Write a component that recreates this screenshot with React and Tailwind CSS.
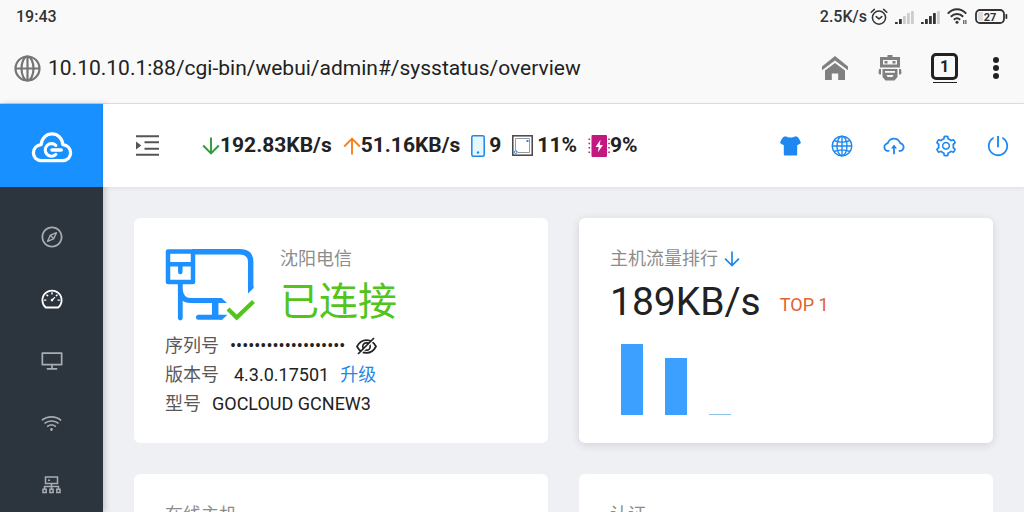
import React, { useState } from "react";
import {
  AiOutlineCloudUpload,
  AiOutlineCompass,
  AiOutlineDashboard,
  AiOutlineDesktop,
  AiOutlinePoweroff,
  AiOutlineSetting,
  AiOutlineWifi,
} from "react-icons/ai";

function AlarmIcon() {
  return (
    <svg width="18" height="18" viewBox="0 0 18 18" fill="none" stroke="#333" strokeWidth="1.5" strokeLinecap="round" strokeLinejoin="round">
      <circle cx="9" cy="9.6" r="6.6" />
      <path d="M6.2 8.6 9 10.9l2.8-2.3M1.2 4.2 4.4 1.4M16.8 4.2 13.6 1.4" />
    </svg>
  );
}

function SignalIcon({ active }) {
  const heights = [2, 5, 8, 11, 13];
  return (
    <svg width="19" height="14" viewBox="0 0 19 14">
      {heights.map((h, i) => (
        <rect key={h} x={i * 4} y={14 - h} width="2.8" height={h} rx="0.6" fill={i < active ? "#333" : "#ccc"} />
      ))}
    </svg>
  );
}

function StatusWifiIcon() {
  return (
    <svg width="21" height="17" viewBox="0 0 21 17" fill="none" stroke="#333" strokeWidth="2">
      <path d="M.8 5.6C6-.2 14-.2 19.200 5.600M3.800 8.800c3.600-3.700 8.800-3.700 12.400 0M6.800 11.800c2-1.900 4.400-1.900 6.400 0" />
      <circle cx="10" cy="14.200" r="1.500" fill="#333" stroke="none" />
      <path d="M16.800 12v4M18.900 12v4" strokeWidth="1" />
    </svg>
  );
}

function BatteryIcon() {
  return (
    <svg width="33" height="16" viewBox="0 0 33 16">
      <rect x="1" y="1" width="28" height="13" rx="4" fill="none" stroke="#333" strokeWidth="1.800" />
      <path d="M5 3h3v9H5a2 2 0 0 1-2-2V5a2 2 0 0 1 2-2Z" fill="#ddd" />
      <rect x="30.500" y="5" width="1.800" height="5" rx="0.800" fill="#333" />
      <text x="15" y="11.500" textAnchor="middle" fontSize="11" fontWeight="700" fontFamily="Roboto, sans-serif" fill="#333">27</text>
    </svg>
  );
}

function AddressGlobeIcon() {
  return (
    <svg className="shrink-0" width="27" height="27" viewBox="0 0 27 27" fill="none" stroke="#757575" strokeWidth="2.200">
      <circle cx="13.500" cy="13.500" r="12" />
      <ellipse cx="13.500" cy="13.500" rx="6" ry="12" />
      <path d="M1.500 13.500h24M13.500 1.500v24" />
    </svg>
  );
}

function HomeIcon() {
  return (
    <svg width="28" height="24" viewBox="0 0 28 24" fill="#808080">
      <path d="M14 0 27 10.500v3.800L14 4.500 1 14.300v-3.800Z" />
      <path d="M14 7 24 14.600V24h-6.800v-6.500h-6.400V24H4v-9.400Z" />
    </svg>
  );
}

function RobotIcon() {
  return (
    <svg width="24" height="26" viewBox="0 0 24 26" fill="#808080">
      <path d="M9.500 0h5v2H22v10.500H2V2h7.500Z" />
      <path d="M5 5h14v4.500H5Z" fill="#f8f8f8" />
      <path d="M6.500 6h3v2.500h-3ZM14.500 6h3v2.500h-3Z" />
      <path d="M4.500 14h15v8l-3 3.500h-9l-3-3.500Z" />
      <path d="M7 16h10v1.800H7ZM8.500 20h7l-1 2h-5Z" fill="#f8f8f8" />
      <path d="M1 14h2v5.500H1.500L.5 18ZM21 14h2l.5 4-1 1.500H21Z" />
    </svg>
  );
}

function CloudLogo() {
  return (
    <svg width="42" height="31" viewBox="0 0 42 32" fill="none" stroke="#fff" strokeLinecap="round" strokeLinejoin="round">
      <path d="M10 29.500C5 29.500 1.800 26 1.800 21.500c0-4.500 3.200-8 8-8.500C10.500 6.500 15 2 21 2s10.500 4.500 11.200 11c4.800.5 8 4 8 8.500s-3.200 8-8.200 8Z" strokeWidth="3.400" />
      <path d="M25 13.800A6.500 6.500 0 1 0 25 23.200" strokeWidth="3.200" />
      <path d="M21 18.500h9.500" strokeWidth="3.600" />
    </svg>
  );
}

function MenuUnfoldIcon() {
  return (
    <svg width="23" height="21" viewBox="0 0 23 21" fill="none" stroke="#555" strokeWidth="2">
      <path d="M0 1.200h23M8.500 7.300H23M8.500 13.700H23M0 19.700h23" />
      <path d="M0 6.500v8l5.300-4Z" fill="#555" stroke="none" />
    </svg>
  );
}

function ArrowIcon({ up, className }) {
  return (
    <svg className={className} width="18" height="18" viewBox="0 0 18 18" fill="none" stroke="currentColor" strokeWidth="1.900">
      <path d={up ? "M9 17.500V1.500M1.200 9.500 9 1.700l7.800 7.800" : "M9 .5v16M1.200 8.500 9 16.300l7.800-7.800"} />
    </svg>
  );
}

function ShirtIcon() {
  return (
    <svg width="21" height="20" viewBox="0 0 21 20" fill="currentColor">
      <path d="M6.500.5c1 1.300 7 1.300 8 0h2.200c1.500.6 3.300 3.500 4 5.800.2.700-.1 1.200-.7 1.500l-2.800 1.400v9.300a1 1 0 0 1-1 1H4.800a1 1 0 0 1-1-1V9.200L1 7.800C.4 7.500.1 7 .3 6.300 1 4 2.800 1.100 4.300.5Z" />
    </svg>
  );
}

function TopologyIcon() {
  return (
    <svg width="21" height="21" viewBox="0 0 21 21" fill="none" stroke="currentColor" strokeWidth="1.500">
      <path d="M4.500 2h12v6.500h-12ZM10.500 8.500V14M3.500 14v-2.500h14V14" />
      <path d="M2 14.300h3.200v3.200H2ZM8.900 14.300h3.200v3.200H8.900ZM15.800 14.300H19v3.200h-3.200Z" />
      <path d="M7 5.200h2" />
    </svg>
  );
}

function PhoneIcon() {
  return (
    <svg width="14" height="22" viewBox="0 0 14 22">
      <rect x="0.800" y="0.800" width="12.400" height="20.400" rx="1.500" fill="#e6f7ff" stroke="#1e88e5" strokeWidth="1.500" />
      <circle cx="7" cy="17.500" r="1.200" fill="#1e88e5" />
    </svg>
  );
}

function CpuIcon() {
  return (
    <svg width="21" height="21" viewBox="0 0 21 21" fill="none">
      <rect x="0.800" y="0.800" width="19.400" height="19.400" stroke="#444" strokeWidth="1.500" />
      <path d="M4 3.500h13.500v14H6L3.500 15V3.500Z" stroke="#999" strokeWidth="1" />
      <path d="M14.500 5h2v2h-2Z" fill="#1e88e5" />
      <circle cx="3.700" cy="17.200" r="1.300" stroke="#1e88e5" />
    </svg>
  );
}

function MemoryIcon() {
  return (
    <svg width="22" height="22" viewBox="0 0 22 22" fill="#c2187f">
      <rect x="3.500" y="0" width="15.500" height="22" rx="1" />
      <path d="M.5 3.500h1.600v1.600H.5ZM.5 7.700h1.600v1.600H.5ZM.5 12h1.600v1.600H.5ZM.5 16.500h1.600v1.600H.5ZM20.200 3.500h1.600v1.600h-1.600ZM20.200 7.700h1.600v1.600h-1.600ZM20.200 12h1.600v1.600h-1.600ZM20.200 16.500h1.600v1.600h-1.600Z" />
      <path d="M12.500 4.800 7.500 12h3.200l-.8 5.200L15 10h-3.200Z" fill="#fff" />
    </svg>
  );
}

function GridGlobeIcon() {
  return (
    <svg width="22" height="22" viewBox="0 0 22 22" fill="none" stroke="currentColor" strokeWidth="1.400">
      <circle cx="11" cy="11" r="9.800" />
      <ellipse cx="11" cy="11" rx="5" ry="9.800" />
      <path d="M1.200 11h19.600M11 1.200v19.600M3 5.500c4.800 2 11.200 2 16 0M3 16.500c4.800-2 11.200-2 16 0" />
    </svg>
  );
}

function ConnectedIcon() {
  return (
    <svg className="shrink-0" width="91" height="74" viewBox="0 0 91 74" fill="none" stroke="#1e90ff" strokeWidth="4.500" strokeLinejoin="round">
      <path d="M3 2.500h25v30.500h-25ZM3 15.200h25" />
      <path d="M15.300 17v6" strokeLinecap="round" />
      <path d="M27 2.800h48Q85.700 2.800 85.700 13v26" strokeWidth="5.400" />
      <path d="M83 37h5.400v2.300L83 44.500Z" fill="#1e90ff" stroke="none" />
      <path d="M15.300 34v35" strokeLinecap="round" strokeWidth="4.800" />
      <path d="M15.300 41q1 10.500 10 10.500h30" strokeWidth="5" />
      <path d="M54 49h2.500l5.500 5h-8Z" fill="#1e90ff" stroke="none" />
      <path d="M50.200 52v16" strokeWidth="6.500" />
      <path d="M33.500 68.300h22" strokeLinecap="round" strokeWidth="5" />
      <path d="M55 65.800h7.500l-5.500 5h-2Z" fill="#1e90ff" stroke="none" />
      <path d="m63 60 8.700 8.500L88.500 52.500" stroke="#52c41a" strokeWidth="4.200" strokeLinejoin="miter" />
    </svg>
  );
}

function HiddenEyeIcon() {
  return (
    <svg width="21" height="18" viewBox="0 0 21 18" fill="none" stroke="#222" strokeWidth="1.700">
      <path d="M1 9.500C5.500 1 15.500 1 20 9.500c-4.500 8.500-14.500 8.500-19 0Z" />
      <circle cx="10.500" cy="9.500" r="3.700" />
      <path d="M3.300 17.800 19.300 1.300" stroke="#fff" strokeWidth="1.600" />
      <path d="M2 17 18 1" />
    </svg>
  );
}

const navItems = [
  { label: "向导", icon: <AiOutlineCompass size={24} /> },
  { label: "系统状态", icon: <AiOutlineDashboard size={24} />, active: true },
  { label: "主机", icon: <AiOutlineDesktop size={24} /> },
  { label: "无线", icon: <AiOutlineWifi size={23} /> },
  { label: "网络", icon: <TopologyIcon /> },
];

const actions = [
  { label: "主题", icon: <ShirtIcon /> },
  { label: "语言", icon: <GridGlobeIcon /> },
  { label: "升级", icon: <AiOutlineCloudUpload size={24} /> },
  { label: "设置", icon: <AiOutlineSetting size={24} /> },
  { label: "退出", icon: <AiOutlinePoweroff size={24} /> },
];

const traffic = [
  { value: 71, color: "#3ba0ff" },
  { value: 57, color: "#3ba0ff" },
  { value: 1, color: "#8cc4ea" },
];

function Card({ children, raised }) {
  return (
    <section className={raised ? "rounded-md bg-white p-[31px] pb-[25px] shadow-[0_2px_10px_rgba(0,0,0,0.12)]" : "rounded-md bg-white p-[31px] pb-[25px]"}>
      {children}
    </section>
  );
}

export default function App() {
  const [masked, setMasked] = useState(true);
  return (
    <div className="flex h-screen flex-col overflow-hidden bg-[#eff0f4] font-['Roboto','Noto_Sans_CJK_SC',sans-serif] text-[#222]">
      <header className="shrink-0 bg-[#f9f9f9]">
        <div className="flex h-[33px] items-center justify-between px-4">
          <span className="text-base font-medium text-[#333]">19:43</span>
          <div className="flex items-center gap-[7px]">
            <span className="-mr-1 text-base font-medium text-[#333]">2.5K/s</span>
            <AlarmIcon />
            <SignalIcon active={2} />
            <SignalIcon active={4} />
            <StatusWifiIcon />
            <BatteryIcon />
          </div>
        </div>
        <div className="flex h-[70px] items-center pr-4 pl-[14px]">
          <AddressGlobeIcon />
          <input
            aria-label="网址"
            className="ml-[7px] min-w-0 flex-1 bg-transparent text-[21px] leading-7 outline-none"
            defaultValue="10.10.10.1:88/cgi-bin/webui/admin#/sysstatus/overview"
          />
          <div className="flex items-center">
            <button aria-label="主页" className="flex w-[55px] justify-center"><HomeIcon /></button>
            <button aria-label="助手" className="flex w-[55px] justify-center"><RobotIcon /></button>
            <button aria-label="标签页" className="flex w-[55px] flex-col items-center gap-[2px]">
              <span className="flex h-[27px] w-[27px] items-center justify-center rounded-[5px] border-[3px] border-[#222] text-base font-bold">1</span>
              <span className="h-px w-6 bg-[#222]" />
            </button>
            <button aria-label="更多" className="ml-3 flex w-6 flex-col items-center gap-[2px]">
              <span className="size-[6px] rounded-full bg-[#222]" />
              <span className="size-[6px] rounded-full bg-[#222]" />
              <span className="size-[6px] rounded-full bg-[#222]" />
            </button>
          </div>
        </div>
        <div className="flex h-px bg-[#e0e0e0]"><div className="w-[103px] bg-[#b5dafb]" /></div>
      </header>

      <div className="flex min-h-0 flex-1">
        <aside className="flex w-[103px] shrink-0 flex-col bg-[#2c343e] shadow-[2px_0_6px_rgba(0,21,41,0.2)]">
          <a href="#/" aria-label="GoCloud" className="flex h-[83px] shrink-0 items-center justify-center bg-[#1890ff] pt-[3px]">
            <CloudLogo />
          </a>
          <nav className="flex flex-col pt-[19px]">
            {navItems.map((item) => (
              <a
                key={item.label}
                href="#/"
                aria-label={item.label}
                className={item.active ? "flex h-[62px] items-center justify-center text-white" : "flex h-[62px] items-center justify-center text-[#a9adb2]"}
              >
                {item.icon}
              </a>
            ))}
          </nav>
        </aside>

        <div className="flex min-w-0 flex-1 flex-col">
          <div className="flex h-[83px] shrink-0 items-center justify-between bg-white pl-[33px] shadow-[0_1px_4px_rgba(0,21,41,0.08)]">
            <div className="flex items-center">
              <button aria-label="展开菜单"><MenuUnfoldIcon /></button>
              <div className="ml-[43px] flex items-center gap-[11px] text-[21px] font-bold whitespace-nowrap">
                <span className="flex items-center"><ArrowIcon className="text-[#2e9a3a]" />192.83KB/s</span>
                <span className="flex items-center"><ArrowIcon up className="text-[#f5821f]" />51.16KB/s</span>
                <span className="flex items-center gap-1"><PhoneIcon />9</span>
                <span className="flex items-center gap-1"><CpuIcon />11%</span>
                <span className="flex items-center"><MemoryIcon />9%</span>
              </div>
            </div>
            <div className="flex items-center text-[#1e88f0]">
              {actions.map((action) => (
                <button key={action.label} aria-label={action.label} className="flex w-[52px] justify-center">{action.icon}</button>
              ))}
            </div>
          </div>

          <main className="grid grid-cols-2 gap-[31px] p-[31px]">
            <Card>
              <div className="flex h-[82px]">
                <ConnectedIcon />
                <div className="ml-6">
                  <p className="text-lg leading-5 text-[#8c8c8c]">沈阳电信</p>
                  <p className="mt-[11px] text-[39px] leading-[44px] text-[#52c41a]">已连接</p>
                </div>
              </div>
              <dl className="text-lg leading-[29px]">
                <div className="flex items-center">
                  <dt className="text-[#595959]">序列号</dt>
                  <dd className="ml-[11px] flex items-center gap-[11px]">
                    <span>{masked ? "•••••••••••••••••••" : "—"}</span>
                    <button aria-label="显示序列号" onClick={() => setMasked(!masked)}><HiddenEyeIcon /></button>
                  </dd>
                </div>
                <div className="flex items-center">
                  <dt className="text-[#595959]">版本号</dt>
                  <dd className="ml-[15px]">4.3.0.17501<a href="#/upgrade" className="ml-[11px] text-[#1e88e5]">升级</a></dd>
                </div>
                <div className="flex items-center">
                  <dt className="text-[#595959]">型号</dt>
                  <dd className="ml-[11px]">GOCLOUD GCNEW3</dd>
                </div>
              </dl>
            </Card>

            <Card raised>
              <h2 className="flex items-center gap-[6px] text-lg leading-5 text-[#8c8c8c]">
                主机流量排行<ArrowIcon className="size-4 text-[#1e88e5]" />
              </h2>
              <p className="mt-2 flex items-center gap-[19px] text-[39px] leading-[50px]">
                189KB/s<span className="pt-[6px] text-lg leading-5 text-[#e0622e]">TOP 1</span>
              </p>
              <div className="mt-[17px] ml-[11px] flex h-[71px] items-end gap-[22px]">
                {traffic.map((bar) => (
                  <div key={bar.value} className="w-[22px]" style={{ height: bar.value, backgroundColor: bar.color }} />
                ))}
              </div>
            </Card>

            <Card>
              <h2 className="text-lg leading-5 text-[#8c8c8c]">在线主机</h2>
            </Card>
            <Card>
              <h2 className="text-lg leading-5 text-[#8c8c8c]">认证</h2>
            </Card>
          </main>
        </div>
      </div>
    </div>
  );
}
